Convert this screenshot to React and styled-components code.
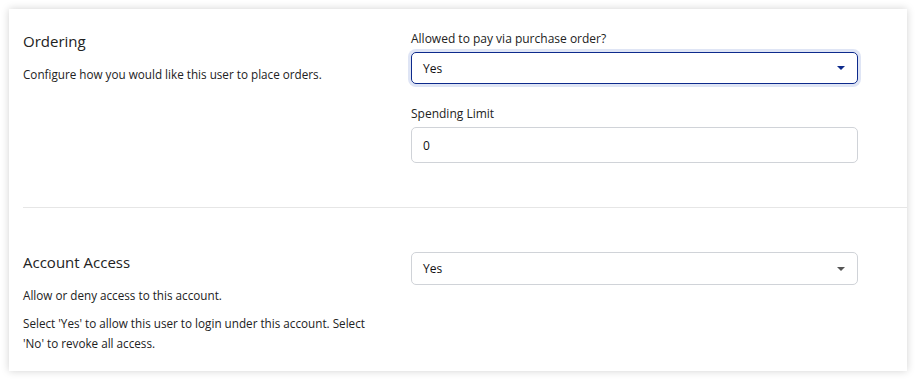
import React from "react";
import styled, { createGlobalStyle } from "styled-components";

const GlobalStyle = createGlobalStyle`
  body {
    margin: 0;
    background: #ffffff;
    font-family: "Open Sans", "Noto Sans", sans-serif;
    color: #1f1f1f;
  }
`;

const Page = styled.div`
  padding: 9px 9px 8px 9px;
`;

const Card = styled.div`
  background: #fff;
  box-shadow: 0 0 8px rgba(0, 0, 0, 0.18);
  height: 362px;
  box-sizing: border-box;
`;

const Section = styled.div`
  display: grid;
  grid-template-columns: 360px 447px;
  column-gap: 28px;
  margin-left: 14px;
  padding: ${(p) => p.pad};
  border-bottom: ${(p) => (p.divider ? "1px solid #e6e6e6" : "none")};
`;

const Info = styled.div`
  padding-top: ${(p) => p.top}px;
`;

const Title = styled.h3`
  margin: 0 0 13px;
  font-size: 15px;
  font-weight: 400;
  color: #222;
`;

const Desc = styled.p`
  margin: 0 0 8px;
  font-size: 11.7px;
  line-height: 20px;
  color: #222;
`;

const Fields = styled.div`
  display: flex;
  flex-direction: column;
  gap: 22px;
`;

const Field = styled.div`
  display: flex;
  flex-direction: column;
`;

const Label = styled.label`
  font-size: 12px;
  line-height: 16px;
  margin-bottom: 5px;
  color: #222;
`;

const Box = styled.div`
  box-sizing: border-box;
  border: 1px solid ${(p) => (p.focused ? "#0d2a8c" : "#d0d3d8")};
  border-radius: 5px;
  box-shadow: ${(p) => (p.focused ? "0 0 0 3px #dfe5f5" : "none")};
  display: flex;
  align-items: center;
  justify-content: space-between;
  padding: 0 12px 0 11px;
  font-size: 12px;
  color: #111;
  height: ${(p) => p.h}px;
`;

const Caret = styled.span`
  width: 0;
  height: 0;
  border-left: 4px solid transparent;
  border-right: 4px solid transparent;
  border-top: 4px solid ${(p) => (p.focused ? "#0d2a8c" : "#555")};
`;

export default function App() {
  return (
    <Page>
      <GlobalStyle />
      <Card>
        <Section pad="22px 0 44px 0" divider>
          <Info top={0}>
            <Title>Ordering</Title>
            <Desc>Configure how you would like this user to place orders.</Desc>
          </Info>
          <Fields>
            <Field>
              <Label>Allowed to pay via purchase order?</Label>
              <Box focused h={32}>
                Yes
                <Caret focused />
              </Box>
            </Field>
            <Field>
              <Label>Spending Limit</Label>
              <Box h={36}>0</Box>
            </Field>
          </Fields>
        </Section>
        <Section pad="44px 0 0 0">
          <Info top={0}>
            <Title>Account Access</Title>
            <Desc>Allow or deny access to this account.</Desc>
            <Desc>
              Select 'Yes' to allow this user to login under this account.
              Select 'No' to revoke all access.
            </Desc>
          </Info>
          <Fields>
            <Box h={33}>
              Yes
              <Caret />
            </Box>
          </Fields>
        </Section>
      </Card>
    </Page>
  );
}
